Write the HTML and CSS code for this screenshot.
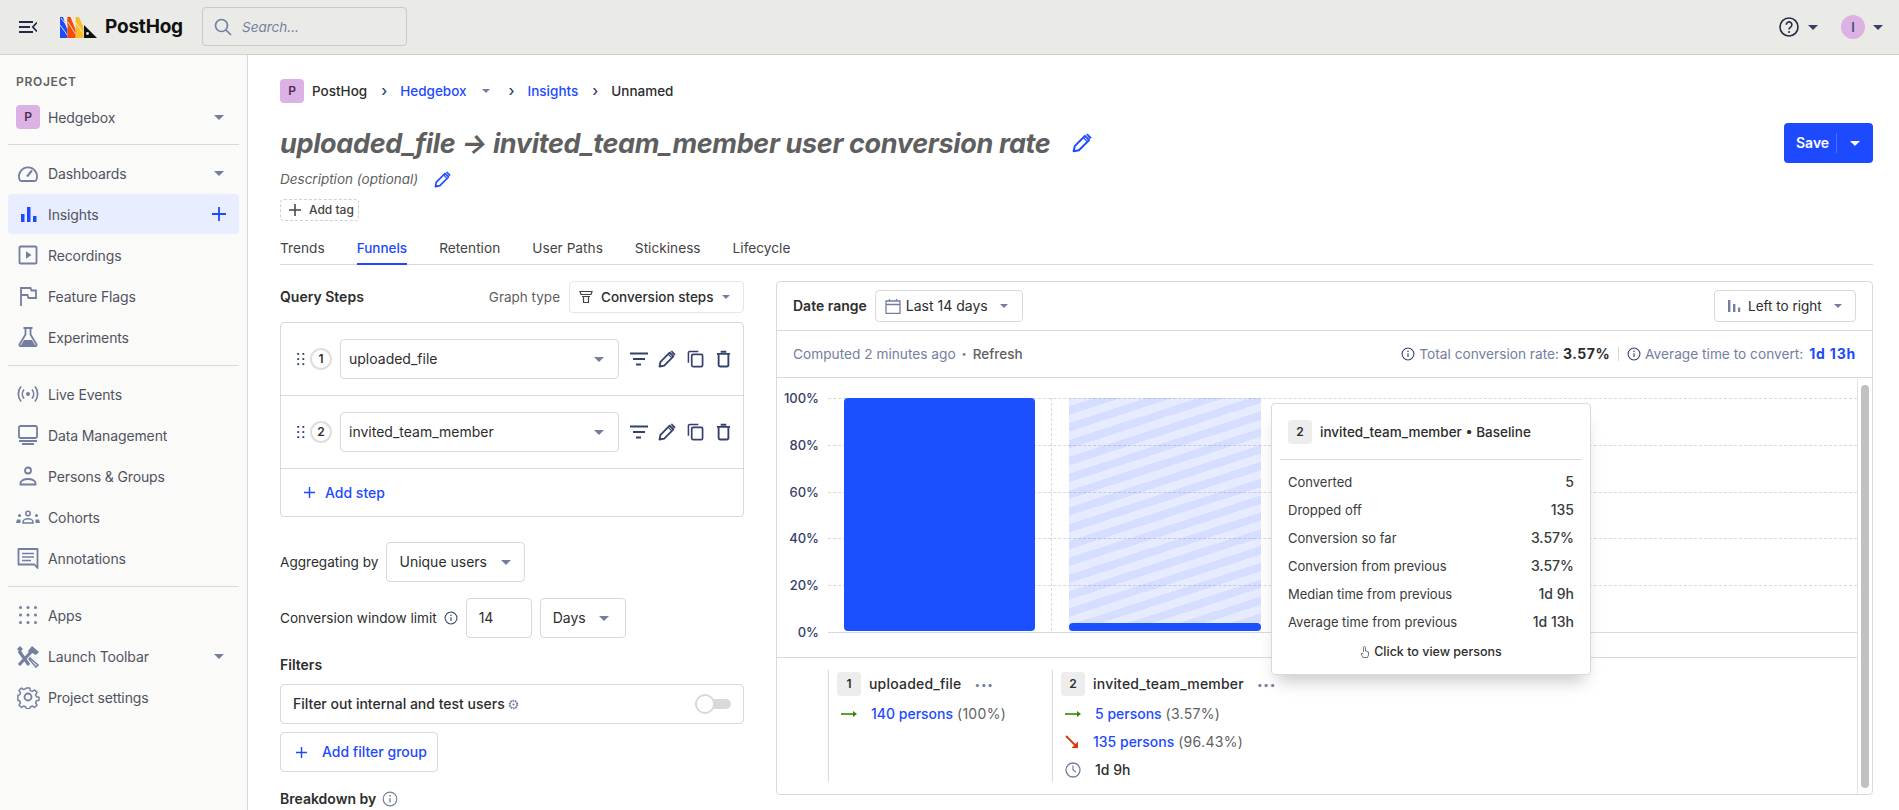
FILE: index.html
```html
<!DOCTYPE html>
<html lang="en">
<head>
<meta charset="utf-8">
<title>PostHog</title>
<link rel="stylesheet" href="styles.css">
</head>
<body>
<svg class="defs" width="0" height="0">
  <symbol id="pencil" viewBox="0 0 24 24"><path d="M2 22l1.300-6.300L15.500 3.500l5 5L8.300 20.700z" fill="none" stroke="currentColor" stroke-width="2.400" stroke-linejoin="round"/><path d="M17.500 2l1-1 4.500 4.500-1.500 1.500z" fill="currentColor" stroke="currentColor" stroke-linejoin="round"/><path d="M14 6l4 4" stroke="currentColor" stroke-width="1.500"/></symbol>
  <symbol id="info" viewBox="0 0 16 16"><circle cx="8" cy="8" r="6.800" fill="none" stroke="currentColor" stroke-width="1.200"/><path d="M8 7v4.500" stroke="currentColor" stroke-width="1.300"/><circle cx="8" cy="4.800" r=".9" fill="currentColor"/></symbol>
  <symbol id="filter" viewBox="0 0 18 18"><path d="M0 3.500h18M3 9h12M6 14.500h5" stroke="currentColor" stroke-width="2"/></symbol>
  <symbol id="copy" viewBox="0 0 18 18"><path d="M12 1H3a1.500 1.500 0 0 0-1.500 1.500V13" fill="none" stroke="currentColor" stroke-width="1.600"/><rect x="5" y="4" width="11.500" height="13" rx="1.500" fill="none" stroke="currentColor" stroke-width="1.800"/></symbol>
  <symbol id="trash" viewBox="0 0 16 18"><path d="M1 3.500h14M5 1.200h6" stroke="currentColor" stroke-width="2"/><path d="M2.800 4v11.500a1.500 1.500 0 0 0 1.500 1.500h7.400a1.500 1.500 0 0 0 1.500-1.500V4" fill="none" stroke="currentColor" stroke-width="2"/></symbol>
  <symbol id="drag" viewBox="0 0 8 14"><g fill="currentColor"><rect x="0" y="0" width="2" height="2"/><rect x="5.500" y="0" width="2" height="2"/><rect x="0" y="5.500" width="2" height="2"/><rect x="5.500" y="5.500" width="2" height="2"/><rect x="0" y="11" width="2" height="2"/><rect x="5.500" y="11" width="2" height="2"/></g></symbol>
  <symbol id="plus" viewBox="0 0 14 14"><path d="M7 0v14M0 7h14" stroke="currentColor" stroke-width="1.800"/></symbol>
  <symbol id="arrow-right" viewBox="0 0 16 10"><path d="M0 5h13" stroke="currentColor" stroke-width="1.600"/><path d="M12 2l4 3-4 3z" fill="currentColor"/></symbol>
  <symbol id="arrow-down" viewBox="0 0 14 14"><path d="M1 1l10.500 10.500" stroke="currentColor" stroke-width="1.800"/><path d="M13 6.500V13H6.500z" fill="currentColor"/></symbol>
</svg>

<header class="topbar">
  <svg class="menu-icon" viewBox="0 0 18 12" width="18" height="12"><path d="M0 1h14M0 6h11M0 11h14M18 1.500L13.800 6 18 10.500" fill="none" stroke="#222b45" stroke-width="1.800"/></svg>
  <div class="logo">
    <svg viewBox="0 0 37 21" width="37" height="21">
      <path d="M0 0h3l4.300 13v8H0z" fill="#1d4aff"/>
      <path d="M7.300 0h3.200l5.200 13v8H7.300z" fill="#f54e00"/>
      <path d="M15.700 0H19l4.500 10v11h-7.800z" fill="#f9bd2b"/>
      <path d="M24 8l13 13H24z" fill="#111"/>
      <circle cx="27.500" cy="16.500" r="1.400" fill="#eaebe6"/>
      <path d="M0 8l7.300 10M1 1l7 9M8 5l7.600 12M16 6l7 10" stroke="#eaebe6" stroke-width=".9"/>
    </svg>
    <span class="logo-text">PostHog</span>
  </div>
  <div class="search">
    <svg viewBox="0 0 18 18" width="18" height="18"><circle cx="7.500" cy="7.500" r="6" fill="none" stroke="#747ea1" stroke-width="1.700"/><path d="M12 12l5 5" stroke="#747ea1" stroke-width="1.700"/></svg>
    <span>Search...</span>
  </div>
  <div class="top-right">
    <svg class="help" viewBox="0 0 20 20" width="20" height="20"><circle cx="10" cy="10" r="9" fill="none" stroke="#222b45" stroke-width="1.600"/><path d="M7.300 7.800a2.800 2.800 0 1 1 4.300 2.300c-1 .7-1.600 1.200-1.600 2.400" fill="none" stroke="#222b45" stroke-width="1.600"/><circle cx="10" cy="15" r="1" fill="#222b45"/></svg>
    <i class="caret caret-dark caret-help"></i>
    <span class="user-avatar">I</span>
    <i class="caret caret-dark"></i>
  </div>
</header>

<div class="layout">
  <aside class="sidebar">
    <div class="side-label">PROJECT</div>
    <div class="nav-item project-item"><span class="avatar">P</span><span class="nav-text">Hedgebox</span><i class="caret"></i></div>
    <hr class="side-divider first-divider">
    <nav class="nav-group">
      <div class="nav-item"><svg class="nav-icon" viewBox="0 0 24 24"><path d="M5.500 20h13a2 2 0 0 0 1.900-1.300A9 9 0 1 0 3.600 18.700 2 2 0 0 0 5.500 20z" fill="none" stroke="currentColor" stroke-width="1.800"/><path d="M11 15.500l5-6" stroke="currentColor" stroke-width="2"/></svg><span class="nav-text">Dashboards</span><i class="caret"></i></div>
      <div class="nav-item active"><svg class="nav-icon" viewBox="0 0 24 24"><path d="M5 12h3.500v8H5zM11 5h3.500v15H11zM17 14h3.500v6H17z" fill="currentColor"/></svg><span class="nav-text">Insights</span><svg class="nav-plus" viewBox="0 0 14 14" width="14" height="14"><use href="#plus"/></svg></div>
      <div class="nav-item"><svg class="nav-icon" viewBox="0 0 24 24"><rect x="3.500" y="3.500" width="17" height="17" rx="1" fill="none" stroke="currentColor" stroke-width="1.800"/><path d="M10 8.200l5.500 3.800-5.500 3.800z" fill="currentColor"/></svg><span class="nav-text">Recordings</span></div>
      <div class="nav-item"><svg class="nav-icon" viewBox="0 0 24 24"><path d="M5 22V4h9.500l1 2.500H20V14h-7.500l-1-3H5" fill="none" stroke="currentColor" stroke-width="1.800"/></svg><span class="nav-text">Feature Flags</span></div>
      <div class="nav-item"><svg class="nav-icon" viewBox="0 0 24 24"><path d="M7.500 3h9M9.500 3v6.500L3.500 19.500a1.200 1.200 0 0 0 1 1.700h15a1.200 1.200 0 0 0 1-1.700l-6-10V3" fill="none" stroke="currentColor" stroke-width="1.800"/><path d="M8 15h8l3.500 6h-15z" fill="currentColor"/></svg><span class="nav-text">Experiments</span></div>
    </nav>
    <hr class="side-divider">
    <nav class="nav-group">
      <div class="nav-item"><svg class="nav-icon" viewBox="0 0 24 24"><circle cx="12" cy="12" r="2" fill="currentColor"/><path d="M8 7.500a7 7 0 0 0 0 9M16 7.500a7 7 0 0 1 0 9M5 4.500a12 12 0 0 0 0 15M19 4.500a12 12 0 0 1 0 15" fill="none" stroke="currentColor" stroke-width="1.700"/></svg><span class="nav-text">Live Events</span></div>
      <div class="nav-item"><svg class="nav-icon" viewBox="0 0 24 24"><rect x="3" y="3" width="18" height="12" rx="1.500" fill="none" stroke="currentColor" stroke-width="1.800"/><path d="M3 18h18M6 21h12" stroke="currentColor" stroke-width="1.800"/></svg><span class="nav-text">Data Management</span></div>
      <div class="nav-item"><svg class="nav-icon" viewBox="0 0 24 24"><circle cx="12" cy="6.500" r="3" fill="none" stroke="currentColor" stroke-width="1.800"/><path d="M4.500 20.500v-1.500c0-2.300 3.700-4 7.500-4s7.500 1.700 7.500 4v1.500z" fill="none" stroke="currentColor" stroke-width="1.800"/></svg><span class="nav-text">Persons &amp; Groups</span></div>
      <div class="nav-item"><svg class="nav-icon" viewBox="0 0 24 24"><circle cx="12" cy="8.500" r="2.200" fill="none" stroke="currentColor" stroke-width="1.500"/><path d="M7 18v-1c0-2 2.500-3.200 5-3.200s5 1.200 5 3.200v1z" fill="none" stroke="currentColor" stroke-width="1.500"/><circle cx="3.500" cy="10.500" r="1.500" fill="currentColor"/><circle cx="20.500" cy="10.500" r="1.500" fill="currentColor"/><path d="M0 18l1-3.500h3.500L4.500 18zM24 18l-1-3.500h-3.500l0 3.500z" fill="currentColor"/></svg><span class="nav-text">Cohorts</span></div>
      <div class="nav-item"><svg class="nav-icon" viewBox="0 0 24 24"><path d="M2.500 3h19v19l-3-3.500H2.500z" fill="none" stroke="currentColor" stroke-width="1.800" stroke-linejoin="round"/><path d="M6 7.500h12M6 11h12M6 14.500h9" stroke="currentColor" stroke-width="1.600"/></svg><span class="nav-text">Annotations</span></div>
    </nav>
    <hr class="side-divider">
    <nav class="nav-group">
      <div class="nav-item"><svg class="nav-icon" viewBox="0 0 24 24"><g fill="currentColor"><circle cx="4.500" cy="4.500" r="1.500"/><circle cx="12" cy="4.500" r="1.500"/><circle cx="19.500" cy="4.500" r="1.500"/><circle cx="4.500" cy="12" r="1.500"/><circle cx="12" cy="12" r="1.500"/><circle cx="19.500" cy="12" r="1.500"/><circle cx="4.500" cy="19.500" r="1.500"/><circle cx="12" cy="19.500" r="1.500"/><circle cx="19.500" cy="19.500" r="1.500"/></g></svg><span class="nav-text">Apps</span></div>
      <div class="nav-item"><svg class="nav-icon" viewBox="0 0 24 24"><path d="M3 21l12-13M13 21L3 7" stroke="currentColor" stroke-width="3.200"/><path d="M1 5l3-3 3 3-3 3zM12 7l4-5 7 6-3 3-4-2-2 1z" fill="currentColor"/><path d="M14 14l8 7-2 2-7-8z" fill="none" stroke="currentColor" stroke-width="1.500"/></svg><span class="nav-text">Launch Toolbar</span><i class="caret"></i></div>
      <div class="nav-item"><svg class="nav-icon" viewBox="0 0 24 24"><circle cx="12" cy="12" r="3.500" fill="none" stroke="currentColor" stroke-width="1.800"/><path d="M10 1.500h4l.6 3 2.500 1 2.600-1.700 2.800 2.800-1.700 2.600 1 2.500 3 .5v3.500l-3 .6-1 2.500 1.700 2.600-2.800 2.800-2.600-1.700-2.500 1-.6 2h-4l-.6-2-2.500-1-2.600 1.700-2.800-2.800 1.700-2.600-1-2.500-2-.6V10l2-.5 1-2.500-1.700-2.600 2.800-2.800 2.600 1.700 2.500-1z" fill="none" stroke="currentColor" stroke-width="1.700" stroke-linejoin="round" transform="translate(1.700 1.700) scale(.86)"/></svg><span class="nav-text">Project settings</span></div>
    </nav>
  </aside>

  <main class="main">
    <div class="crumbs">
      <span class="avatar">P</span><span>PostHog</span>
      <i class="crumb-sep">›</i>
      <a class="link">Hedgebox</a><i class="caret caret-small"></i>
      <i class="crumb-sep">›</i>
      <a class="link">Insights</a>
      <i class="crumb-sep">›</i>
      <span>Unnamed</span>
    </div>

    <div class="title-row">
      <div class="title-left">
        <h1 class="title">uploaded_file → invited_team_member user conversion rate</h1>
        <svg class="pencil-blue title-pencil" width="20" height="20"><use href="#pencil"/></svg>
      </div>
      <div class="save-btn"><span class="save-label">Save</span><span class="save-drop"><i class="caret caret-white"></i></span></div>
    </div>

    <div class="desc-row"><span>Description (optional)</span><svg class="pencil-blue" width="17" height="17"><use href="#pencil"/></svg></div>
    <div class="tag-btn"><svg width="12" height="12" viewBox="0 0 14 14"><use href="#plus"/></svg><span>Add tag</span></div>

    <div class="tabs">
      <span class="tab">Trends</span><span class="tab tab-active">Funnels</span><span class="tab">Retention</span><span class="tab">User Paths</span><span class="tab">Stickiness</span><span class="tab">Lifecycle</span>
    </div>

    <div class="columns">
      <section class="left">
        <div class="head-row">
          <strong class="section-title">Query Steps</strong>
          <span class="muted graph-label">Graph type</span>
          <div class="select graph-select"><svg width="14" height="14" viewBox="0 0 14 14"><path d="M1 1.500h12l-1 3H2zM3 6.500h8M4.500 7v5.500h5V7" fill="none" stroke="#444" stroke-width="1.200"/></svg><span class="medium">Conversion steps</span><i class="caret caret-small"></i></div>
        </div>

        <div class="steps">
          <div class="step">
            <svg class="drag" width="8" height="13"><use href="#drag"/></svg><span class="step-num">1</span>
            <div class="select step-select"><span>uploaded_file</span><i class="caret"></i></div>
            <div class="step-actions">
              <svg width="18" height="18"><use href="#filter"/></svg>
              <svg width="18" height="18"><use href="#pencil"/></svg>
              <svg class="copy-icon" width="17" height="18"><use href="#copy"/></svg>
              <svg width="15" height="18"><use href="#trash"/></svg>
            </div>
          </div>
          <div class="step">
            <svg class="drag" width="8" height="13"><use href="#drag"/></svg><span class="step-num">2</span>
            <div class="select step-select"><span>invited_team_member</span><i class="caret"></i></div>
            <div class="step-actions">
              <svg width="18" height="18"><use href="#filter"/></svg>
              <svg width="18" height="18"><use href="#pencil"/></svg>
              <svg class="copy-icon" width="17" height="18"><use href="#copy"/></svg>
              <svg width="15" height="18"><use href="#trash"/></svg>
            </div>
          </div>
          <div class="add-step link medium"><svg width="11" height="11" viewBox="0 0 14 14"><use href="#plus"/></svg><span>Add step</span></div>
        </div>

        <div class="field agg-row"><span class="field-label">Aggregating by</span><div class="select agg-select"><span>Unique users</span><i class="caret"></i></div></div>
        <div class="field window-row">
          <span class="field-label">Conversion window limit</span>
          <svg class="info" width="14" height="14"><use href="#info"/></svg>
          <div class="select num-input"><span>14</span></div>
          <div class="select days-select"><span>Days</span><i class="caret"></i></div>
        </div>

        <strong class="section-title filters-title">Filters</strong>
        <div class="filter-box">
          <span class="medium">Filter out internal and test users</span>
          <svg class="mini-gear" width="11" height="11" viewBox="0 0 10 10"><circle cx="5" cy="5" r="3.400" fill="none" stroke="#747ea1" stroke-width="1.800" stroke-dasharray="1.500 .6"/><circle cx="5" cy="5" r="1" fill="#747ea1"/></svg>
          <span class="toggle"><span class="toggle-knob"></span></span>
        </div>
        <div class="add-filter link medium"><svg width="11" height="11" viewBox="0 0 14 14"><use href="#plus"/></svg><span>Add filter group</span></div>
        <div class="breakdown"><strong class="section-title">Breakdown by</strong><svg class="info" width="16" height="16"><use href="#info"/></svg></div>
      </section>

      <section class="card">
        <div class="card-head">
          <strong class="section-title">Date range</strong>
          <div class="select date-btn"><svg width="16" height="16" viewBox="0 0 16 16"><path d="M1 3h14v12.500H1zM1 6.500h14M4.500 1v2M11.500 1v2" fill="none" stroke="#747ea1" stroke-width="1.300"/></svg><span>Last 14 days</span><i class="caret caret-small"></i></div>
          <div class="select dir-btn"><svg width="14" height="14" viewBox="0 0 14 14"><path d="M1 1h2.400v12H1zM6 5h2.400v8H6zM11 8.500h2.200V13H11z" fill="#747ea1"/></svg><span>Left to right</span><i class="caret caret-small"></i></div>
        </div>
        <div class="stats">
          <span class="stat-muted">Computed 2 minutes ago</span><span class="dot">•</span><span class="refresh">Refresh</span>
          <div class="stats-right">
            <svg width="14" height="14" class="info"><use href="#info"/></svg><span class="stat-muted">Total conversion rate:</span><b class="stat-bold">3.57%</b>
            <span class="stat-sep"></span>
            <svg width="14" height="14" class="info"><use href="#info"/></svg><span class="stat-muted">Average time to convert:</span><b class="stat-link">1d 13h</b>
          </div>
        </div>
        <div class="card-body">
          <div class="card-scroll">
            <div class="chart">
              <div class="y-axis"><span>100%</span><span>80%</span><span>60%</span><span>40%</span><span>20%</span><span>0%</span></div>
              <div class="plot">
                <div class="gridlines"><div></div><div></div><div></div><div></div><div></div></div>
                <div class="bar-col"><div class="bar-solid"></div></div>
                <div class="bar-col bar-col-2"><div class="bar-striped"><div class="bar-low"></div></div></div>
              </div>
            </div>
            <div class="legend">
              <div class="leg-col">
                <div class="leg-head"><span class="badge">1</span><span class="medium leg-name">uploaded_file</span><span class="dots">•••</span></div>
                <div class="leg-row"><svg class="arrow-g" width="16" height="10"><use href="#arrow-right"/></svg><span><a class="link medium">140 persons</a> <span class="pct">(100%)</span></span></div>
              </div>
              <div class="leg-col">
                <div class="leg-head"><span class="badge">2</span><span class="medium leg-name">invited_team_member</span><span class="dots">•••</span></div>
                <div class="leg-row"><svg class="arrow-g" width="16" height="10"><use href="#arrow-right"/></svg><span><a class="link medium">5 persons</a> <span class="pct">(3.57%)</span></span></div>
                <div class="leg-row"><svg class="arrow-r" width="14" height="14"><use href="#arrow-down"/></svg><span><a class="link medium">135 persons</a> <span class="pct">(96.43%)</span></span></div>
                <div class="leg-row"><svg class="clock" width="16" height="16" viewBox="0 0 16 16"><circle cx="8" cy="8" r="7" fill="none" stroke="#747ea1" stroke-width="1.300"/><path d="M8 3.500V8l3 2" fill="none" stroke="#747ea1" stroke-width="1.200"/></svg><span class="medium">1d 9h</span></div>
              </div>
            </div>
          </div>
          <div class="scrollbar"><div class="thumb"></div></div>
          <div class="tooltip">
            <div class="tip-head"><span class="badge">2</span><span class="medium">invited_team_member • Baseline</span></div>
            <div class="tip-rows">
              <div class="tip-row"><span>Converted</span><b>5</b></div>
              <div class="tip-row"><span>Dropped off</span><b>135</b></div>
              <div class="tip-row"><span>Conversion so far</span><b>3.57%</b></div>
              <div class="tip-row"><span>Conversion from previous</span><b>3.57%</b></div>
              <div class="tip-row"><span>Median time from previous</span><b>1d 9h</b></div>
              <div class="tip-row"><span>Average time from previous</span><b>1d 13h</b></div>
            </div>
            <div class="tip-foot"><svg width="10" height="12" viewBox="0 0 10 12"><path d="M3.500 6V1.500a1 1 0 0 1 2 0V5l3 1v3l-1 2.500H3L1 8l1-1 1.500 1" fill="none" stroke="#555" stroke-width=".8"/></svg><span class="medium">Click to view persons</span></div>
          </div>
        </div>
      </section>
    </div>
  </main>
</div>
</body>
</html>
```

FILE: styles.css
```css
* { box-sizing: border-box; }
html, body { margin: 0; height: 810px; overflow: hidden; }
body { font-family: Inter, "Liberation Sans", sans-serif; font-size: 14px; color: #2d2d2d; background: #fff; line-height: 22px; }
.defs { position: absolute; }
svg { display: block; flex: none; }
a { text-decoration: none; }
.link { color: #1d4aff; }
.medium { font-weight: 500; }
.muted { color: #5f5f5f; }

.caret { display: block; flex: none; width: 0; height: 0; border-left: 5px solid transparent; border-right: 5px solid transparent; border-top: 5px solid #747ea1; }
.caret-small { border-left-width: 4px; border-right-width: 4px; border-top-width: 4px; }
.caret-dark { border-top-color: #35416b; }
.caret-white { border-top-color: #fff; }

.topbar { height: 55px; background: #eaebe6; border-bottom: 1px solid #d0d0cd; display: flex; align-items: center; padding-left: 19px; }
.menu-icon { margin-right: 23px; }
.logo { display: flex; align-items: center; width: 142px; gap: 8px; }
.logo-text { font-weight: 700; font-size: 19px; color: #111; letter-spacing: -.2px; }
.search { width: 205px; height: 39px; border: 1px solid #c9c9c6; border-radius: 4px; display: flex; align-items: center; gap: 10px; padding-left: 11px; font-style: italic; color: #747ea1; font-size: 13.500px; margin-bottom: 1px; }
.top-right { margin-left: auto; display: flex; align-items: center; padding-right: 16px; }
.caret-help { margin-left: 9px; margin-right: 23px; }
.user-avatar { width: 24px; height: 24px; border-radius: 50%; background: #dcb1e3; color: #35416b; display: flex; align-items: center; justify-content: center; font-size: 13px; font-weight: 500; margin-right: 8px; }

.layout { display: flex; height: 755px; }
.sidebar { width: 248px; flex: none; background: #fafaf9; border-right: 1px solid #d9d9d9; padding: 16px 8px 0; }
.side-label { font-size: 12px; font-weight: 600; letter-spacing: .7px; color: #5f5f5f; padding-left: 8px; line-height: 22px; height: 22px; }
.nav-group { display: flex; flex-direction: column; padding: 8px 0; gap: 1px; }
.nav-item { height: 40px; display: flex; align-items: center; padding: 0 8px; gap: 8px; border-radius: 4px; color: #50545f; }
.project-item { margin-top: 4px; }
.nav-text { flex: 1; letter-spacing: -.12px; padding-top: 1px; }
.nav-icon { width: 24px; height: 24px; color: #747ea1; }
.nav-item > .caret { margin-right: 7px; }
.nav-item.active { background: #e8edff; }
.nav-item.active .nav-icon { color: #1d4aff; }
.nav-plus { color: #1d4aff; margin-right: 5px; }
.side-divider { border: 0; border-top: 1px solid #d9d9d9; margin: 0; }
.first-divider { margin-top: 7px; }
.avatar { width: 24px; height: 24px; background: #dcb1e3; border-radius: 4px; color: #4b2c55; font-size: 12px; font-weight: 600; display: flex; align-items: center; justify-content: center; flex: none; }

.main { flex: 1; min-width: 0; padding: 24px 26px 0 32px; }
.crumbs { display: flex; align-items: center; height: 24px; font-weight: 500; font-size: 13.500px; }
.crumbs .avatar { margin-right: 8px; }
.crumb-sep { font-style: normal; color: #35416b; margin: 0 13px 0 14px; font-size: 15px; }
.crumbs .caret { margin-left: 15px; margin-right: 5px; }
.title-row { display: flex; align-items: center; justify-content: space-between; height: 40px; margin-top: 20px; }
.title-left { display: flex; align-items: center; gap: 22px; }
.title { margin: 0; padding-top: 1px; font-size: 27px; line-height: 34px; font-weight: 700; font-style: italic; color: #5f5f5f; letter-spacing: -.35px; }
.pencil-blue { color: #1d4aff; }
.save-btn { width: 89px; height: 40px; background: #1d4aff; border-radius: 4px; color: #fff; font-weight: 600; display: flex; align-items: center; }
.save-label { padding-left: 12px; width: 52px; }
.save-drop { height: 20px; border-left: 1px solid #4a6eff; flex: 1; display: flex; align-items: center; justify-content: center; }
.desc-row { display: flex; align-items: center; gap: 16px; height: 22px; margin-top: 5px; font-style: italic; color: #5f5f5f; font-size: 13.500px; }
.tag-btn { display: flex; align-items: center; gap: 8px; width: 79px; height: 22px; margin-top: 9px; padding-left: 8px; border: 1px dashed #d0d0d0; border-radius: 4px; font-size: 12px; font-weight: 500; color: #444; }
.tabs { display: flex; gap: 32px; height: 33px; margin-top: 11px; border-bottom: 1px solid #d9d9d9; }
.tab { height: 33px; line-height: 33px; font-size: 13.700px; color: #444; }
.tab-active { color: #1d4aff; font-weight: 500; font-size: 13.500px; border-bottom: 2px solid #1d4aff; }

.columns { display: flex; gap: 32px; margin-top: 16px; }
.left { width: 464px; flex: none; }
.head-row { display: flex; align-items: center; height: 32px; }
.section-title { font-weight: 600; }
.graph-label { margin-left: auto; margin-right: 9px; font-size: 13.500px; }
.select { display: flex; align-items: center; background: #fff; border: 1px solid #d9d9d9; border-radius: 4px; height: 40px; padding: 0 12px; white-space: nowrap; }
.select .caret { margin-left: auto; }
.graph-select { width: 175px; height: 32px; gap: 8px; padding: 0 13px 0 9px; border-color: #e6e6e6; font-size: 13.500px; }
.steps { margin-top: 9px; border: 1px solid #d9d9d9; border-radius: 4px; }
.step { height: 73px; display: flex; align-items: center; padding-left: 16px; border-bottom: 1px solid #d9d9d9; }
.drag { color: #35416b; margin-right: 5px; }
.step-num { width: 22px; height: 22px; border: 2px solid #dedede; border-radius: 50%; display: flex; align-items: center; justify-content: center; font-size: 12px; font-weight: 600; margin-right: 8px; }
.step-select { width: 279px; padding: 0 14px 0 8px; }
.step-actions { display: flex; align-items: center; margin-left: 11px; color: #35416b; gap: 10px; }
.copy-icon { margin: 0 2px 0 1px; }
.add-step { height: 47px; display: flex; align-items: center; padding-left: 23px; gap: 10px; }
.field { display: flex; align-items: center; }
.field-label { font-size: 13.600px; }
.agg-row { margin-top: 25px; gap: 8px; }
.agg-select { width: 139px; padding: 0 13px 0 12px; }
.window-row { margin-top: 16px; }
.window-row .info { margin: 0 8px 0 7px; color: #35416b; }
.num-input { width: 66px; margin-right: 8px; }
.days-select { width: 86px; padding: 0 16px 0 12px; }
.filters-title { display: block; margin-top: 16px; }
.filter-box { height: 40px; margin-top: 8px; border: 1px solid #d9d9d9; border-radius: 4px; display: flex; align-items: center; padding: 0 12px; gap: 3px; }
.toggle { margin-left: auto; width: 36px; height: 10px; background: #d9d9d9; border-radius: 5px; position: relative; }
.toggle-knob { position: absolute; left: 0; top: -5px; width: 20px; height: 20px; background: #fff; border: 2px solid #d9d9d9; border-radius: 50%; }
.add-filter { width: 158px; height: 40px; margin-top: 8px; border: 1px solid #d9d9d9; border-radius: 4px; display: flex; align-items: center; gap: 15px; padding-left: 15px; }
.breakdown { display: flex; align-items: center; gap: 6px; margin-top: 16px; }
.breakdown .info { color: #747ea1; }

.card { flex: 1; min-width: 0; height: 514px; border: 1px solid #d9d9d9; border-radius: 4px; display: flex; flex-direction: column; }
.card-head { height: 49px; flex: none; display: flex; align-items: center; padding: 0 16px; border-bottom: 1px solid #d9d9d9; }
.date-btn { width: 148px; height: 32px; margin-left: 8px; padding: 0 14px 0 9px; gap: 5px; }
.dir-btn { width: 142px; height: 32px; margin-left: auto; padding: 0 13px 0 12px; gap: 6px; font-size: 13.500px; }
.dir-btn svg { margin-right: 1px; }
.stats { height: 47px; flex: none; display: flex; align-items: center; padding: 0 16px; border-bottom: 1px solid #d9d9d9; font-size: 13.700px; }
.stat-muted { color: #747ea1; }
.dot { color: #747ea1; margin: 0 6px; font-size: 9px; }
.refresh { color: #5f5f5f; font-weight: 500; font-size: 13.500px; }
.stats-right { margin-left: auto; display: flex; align-items: center; }
.stats-right .info { color: #35416b; margin-right: 4px; }
.stat-bold { font-weight: 700; font-size: 14px; margin-left: 4px; letter-spacing: .5px; }
.stat-link { font-weight: 700; font-size: 14px; color: #1d4aff; margin-left: 6px; letter-spacing: .8px; }
.stat-sep { width: 1px; height: 14px; background: #d9d9d9; margin: 0 8px; }

.card-body { flex: 1; min-height: 0; display: flex; position: relative; }
.card-scroll { flex: 1; min-width: 0; display: flex; flex-direction: column; }
.chart { height: 280px; flex: none; display: flex; border-bottom: 1px solid #d9d9d9; padding-top: 20px; }
.y-axis { width: 51px; height: 234px; flex: none; display: flex; flex-direction: column; justify-content: space-between; align-items: flex-end; padding-right: 9px; font-size: 13px; font-weight: 500; color: #35416b; }
.y-axis span { height: 0; line-height: 0; }
.plot { flex: 1; height: 235px; position: relative; display: flex; padding-bottom: 1px; border-bottom: 1px solid #d9d9d9; }
.gridlines { position: absolute; inset: 0; display: flex; flex-direction: column; }
.gridlines div { flex: 1; border-top: 1px dashed #d9d9d9; }
.bar-col { width: 224px; padding: 0 16px; border-right: 1px dashed #d9d9d9; position: relative; }
.bar-col-2 { border-right: 0; padding: 0 15px 0 17px; }
.bar-solid { height: 100%; background: #1a50ff; border-radius: 4px; }
.bar-striped { height: 100%; width: 192px; display: flex; align-items: flex-end; background: repeating-linear-gradient(162deg, rgba(29, 74, 255, .11) 0 8px, rgba(29, 74, 255, .18) 8px 16px); }
.bar-low { width: 100%; height: 8px; background: #1a50ff; border-radius: 4px; }
.legend { flex: 1; display: flex; padding: 12px 0 0 51px; }
.leg-col { width: 224px; height: 112px; border-left: 1px solid #d9d9d9; padding-left: 8px; }
.leg-head { display: flex; align-items: center; height: 24px; margin-top: 2px; gap: 8px; }
.leg-name { letter-spacing: .2px; }
.badge { width: 24px; height: 24px; background: #ededed; border-radius: 4px; display: flex; align-items: center; justify-content: center; font-size: 12px; font-weight: 600; flex: none; }
.dots { color: #747ea1; font-size: 10px; margin-left: 5px; letter-spacing: .8px; }
.leg-row { height: 28px; display: flex; align-items: center; }
.leg-head + .leg-row { margin-top: 4px; }
.leg-row svg { margin-left: 4px; margin-right: 14px; }
.arrow-g { color: #388600; }
.arrow-r { color: #db3707; }
.pct { color: #5f5f5f; letter-spacing: .3px; }
.scrollbar { width: 15px; flex: none; border-left: 1px solid #e4e4e4; padding: 7px 3px 6px 3px; }
.thumb { height: 100%; background: #c1c1c1; border-radius: 4px; }

.tooltip { position: absolute; left: 494px; top: 25px; width: 320px; height: 272px; background: #fff; border: 1px solid #d9d9d9; border-radius: 4px; box-shadow: 0 12px 16px -6px rgba(0, 0, 0, .22); font-size: 13px; padding: 0 8px; z-index: 3; }
.tip-head { height: 56px; display: flex; align-items: center; gap: 8px; padding: 0 8px; border-bottom: 1px solid #d9d9d9; font-size: 13.500px; }
.tip-rows { padding: 8px 8px 0; }
.tip-row { height: 28px; display: flex; justify-content: space-between; align-items: center; color: #3a3a3a; }
.tip-row b { font-weight: 500; font-size: 14px; }
.tip-foot { display: flex; justify-content: center; align-items: center; gap: 4px; margin-top: 5px; font-size: 12.500px; }
```
